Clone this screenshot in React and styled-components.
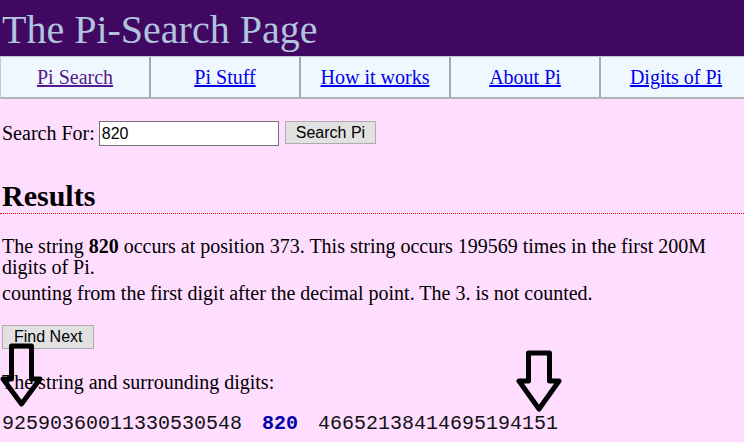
import React from 'react';
import styled, { createGlobalStyle } from 'styled-components';

const GlobalStyle = createGlobalStyle`
    html, body {
        margin: 0;
        padding: 0;
        background: #ffddff;
        overflow: hidden;
    }
    body {
        font-family: "Liberation Serif", "Times New Roman", serif;
        font-size: 20px;
        color: #000;
    }
`;

const Page = styled.div`
    position: relative;
    width: 744px;
    overflow: hidden;
`;

const Header = styled.div`
    background: #400860;
    color: #b0c4de;
    font-size: 40px;
    line-height: 44px;
    padding: 8px 2px 4px;
`;

const Nav = styled.div`
    display: grid;
    grid-template-columns: repeat(5, 150px);
    width: 750px;
    background: #f0f8ff;
    border-top: 1px solid #c8c8c8;
    border-bottom: 2px solid #b4b4b4;
    border-left: 1px solid #c8c8c8;
`;

const NavCell = styled.div`
    text-align: center;
    padding: 9px 0 8px;
    line-height: 23px;
    border-right: ${(p) => (p.$last ? 'none' : '2px solid #a9a9a9')};
`;

const NavLink = styled.a`
    color: ${(p) => (p.$visited ? '#551a8b' : '#0000ee')};
    text-decoration: underline;
`;

const Content = styled.div`
    padding: 0 2px;
`;

const SearchRow = styled.div`
    display: flex;
    align-items: flex-start;
    margin-top: 22px;
`;

const Label = styled.span`
    line-height: 23px;
    margin-top: 1px;
    margin-right: 4px;
`;

const TextInput = styled.input`
    box-sizing: border-box;
    width: 180px;
    height: 25px;
    border: 1px solid #767676;
    padding: 0 2px;
    font-family: "Liberation Sans", Arial, sans-serif;
    font-size: 16px;
    background: #fff;
    margin: 0 6px 0 0;
`;

const Button = styled.button`
    box-sizing: border-box;
    height: ${(p) => p.$h || 24}px;
    margin: 0;
    padding: 0 ${(p) => p.$pad || 11}px;
    background: #e1e1e1;
    border: 1px solid #adadad;
    font-family: "Liberation Sans", Arial, sans-serif;
    font-size: 16px;
    color: #000;
`;

const Heading = styled.h2`
    margin: 32px -2px 0 -2px;
    padding: 0 0 0 2px;
    font-size: 30px;
    line-height: 35px;
    font-weight: bold;
    border-bottom: 1px dotted red;
`;

const Para = styled.p`
    margin: 22px 0 0 0;
    line-height: 21px;
`;

const ParaLine = styled.span`
    display: block;
    margin-top: ${(p) => p.$gap || 0}px;
`;

const ButtonRow = styled.div`
    margin-top: 20px;
`;

const Caption = styled.p`
    margin: 22px 0 0 0;
    line-height: 23px;
`;

const Digits = styled.div`
    margin-top: 18px;
    font-family: "Liberation Mono", "Courier New", monospace;
    font-size: 20px;
    line-height: 23px;
    white-space: pre;
    color: #111;
`;

const Match = styled.b`
    color: #0000aa;
    margin: 0 20px;
`;

const ArrowSvg = styled.svg`
    position: absolute;
    left: ${(p) => p.$x}px;
    top: ${(p) => p.$y}px;
    overflow: visible;
    pointer-events: none;
`;

function Arrow({ x, y, w, shaft, head, depth }) {
    const cx = w / 2;
    const s = shaft / 2;
    const d = `M ${cx - s} 0 L ${cx + s} 0 L ${cx + s} ${head} L ${w} ${head} L ${cx} ${head + depth} L 0 ${head} L ${cx - s} ${head} Z`;
    return (
        <ArrowSvg $x={x} $y={y} width={w} height={head + depth}>
            <path d={d} fill="none" stroke="#000" strokeWidth="5" strokeLinejoin="round" />
        </ArrowSvg>
    );
}

const links = ['Pi Search', 'Pi Stuff', 'How it works', 'About Pi', 'Digits of Pi'];

export default function App() {
    return (
        <Page>
            <GlobalStyle />
            <Header>The Pi-Search Page</Header>
            <Nav>
                {links.map((l, i) => (
                    <NavCell key={l} $last={i === links.length - 1}>
                        <NavLink href="#" $visited={i === 0}>{l}</NavLink>
                    </NavCell>
                ))}
            </Nav>
            <Content>
                <SearchRow>
                    <Label>Search For:</Label>
                    <TextInput defaultValue="820" />
                    <Button $h={23} $pad={10}>Search Pi</Button>
                </SearchRow>
                <Heading>Results</Heading>
                <Para>
                    <ParaLine>
                        The string <b>820</b> occurs at position 373. This string occurs 199569 times in the first 200M digits of Pi.
                    </ParaLine>
                    <ParaLine $gap={5}>
                        counting from the first digit after the decimal point. The 3. is not counted.
                    </ParaLine>
                </Para>
                <ButtonRow>
                    <Button>Find Next</Button>
                </ButtonRow>
                <Caption>The string and surrounding digits:</Caption>
                <Digits>92590360011330530548<Match>820</Match>46652138414695194151</Digits>
            </Content>
            <Arrow x={2.5} y={345.5} w={37} shaft={20} head={33} depth={25} />
            <Arrow x={518.5} y={353} w={40} shaft={21} head={28} depth={28} />
        </Page>
    );
}
